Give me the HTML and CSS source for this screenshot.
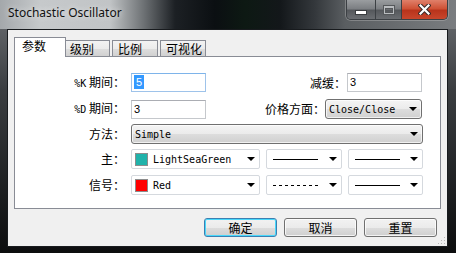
FILE: index.html
```html
<!DOCTYPE html>
<html>
<head>
<meta charset="utf-8">
<link rel="stylesheet" href="styles.css">
</head>
<body>
<div class="window">
  <div class="titlebar">
    <div class="title">Stochastic Oscillator</div>
    <div class="caption">
      <div class="cbtn cmin"><span class="glyph-min"></span></div>
      <div class="cbtn cmax"><span class="glyph-max"></span></div>
      <div class="cbtn cclose">
        <svg width="13" height="11" viewBox="0 0 13 11"><path d="M2.5 1.5 L10.5 9.5 M10.5 1.5 L2.5 9.5" stroke="#3a2a28" stroke-width="4.2" stroke-linecap="square"/><path d="M2.5 1.5 L10.5 9.5 M10.5 1.5 L2.5 9.5" stroke="#ffffff" stroke-width="2.2" stroke-linecap="square"/></svg>
      </div>
    </div>
  </div>
  <div class="client">
    <div class="tabs">
      <div class="tab active">参数</div>
      <div class="tab">级别</div>
      <div class="tab">比例</div>
      <div class="tab">可视化</div>
    </div>
    <div class="panel">
      <div class="row r1">
        <div class="lbl"><span class="mono">%K</span> 期间：</div>
        <div class="edit focus w75"><span class="sel">5</span></div>
        <div class="lbl2">减缓：</div>
        <div class="edit w75 gap1">3</div>
      </div>
      <div class="row r2">
        <div class="lbl"><span class="mono">%D</span> 期间：</div>
        <div class="edit w75">3</div>
        <div class="lbl2">价格方面：</div>
        <div class="drop w97"><span class="mono">Close/Close</span><span class="arrow"></span></div>
      </div>
      <div class="row r3">
        <div class="lbl">方法：</div>
        <div class="drop w292"><span class="mono">Simple</span><span class="arrow"></span></div>
      </div>
      <div class="row r4">
        <div class="lbl">主：</div>
        <div class="combo w129"><span class="swatch sea"></span><span class="mono">LightSeaGreen</span><span class="arrow"></span></div>
        <div class="combo w76 gap6"><svg class="line" width="45" height="3" viewBox="0 0 45 3"><line x1="0" y1="1.5" x2="45" y2="1.5" stroke="#000" stroke-width="1"/></svg><span class="arrow"></span></div>
        <div class="combo w75 gap6"><svg class="line" width="45" height="3" viewBox="0 0 45 3"><line x1="0" y1="1.5" x2="45" y2="1.5" stroke="#000" stroke-width="1"/></svg><span class="arrow"></span></div>
      </div>
      <div class="row r5">
        <div class="lbl">信号：</div>
        <div class="combo w129"><span class="swatch red"></span><span class="mono">Red</span><span class="arrow"></span></div>
        <div class="combo w76 gap6"><svg class="line" width="45" height="3" viewBox="0 0 45 3"><line x1="0" y1="1.5" x2="45" y2="1.5" stroke="#000" stroke-width="1" stroke-dasharray="3 3"/></svg><span class="arrow"></span></div>
        <div class="combo w75 gap6"><svg class="line" width="45" height="3" viewBox="0 0 45 3"><line x1="0" y1="1.5" x2="45" y2="1.5" stroke="#000" stroke-width="1"/></svg><span class="arrow"></span></div>
      </div>
    </div>
    <div class="buttons">
      <div class="btn default">确定</div>
      <div class="btn">取消</div>
      <div class="btn">重置</div>
    </div>
    <div class="gripwrap">
      <svg class="grip" width="8" height="8" viewBox="0 0 8 8">
        <rect x="6" y="0" width="1" height="1" fill="#b8b8b8"/>
        <rect x="3" y="3" width="1" height="1" fill="#b8b8b8"/><rect x="6" y="3" width="1" height="1" fill="#b8b8b8"/>
        <rect x="0" y="6" width="1" height="1" fill="#b8b8b8"/><rect x="3" y="6" width="1" height="1" fill="#b8b8b8"/><rect x="6" y="6" width="1" height="1" fill="#b8b8b8"/>
      </svg>
    </div>
  </div>
</div>
</body>
</html>
```

FILE: styles.css
```css
* { box-sizing: border-box; }
html, body { margin: 0; padding: 0; }
body {
  width: 456px;
  height: 253px;
  overflow: hidden;
  background: #000;
  font-family: "Noto Sans CJK SC", sans-serif;
  font-size: 12px;
  color: #000;
}
.window {
  width: 456px;
  height: 253px;
  display: flex;
  flex-direction: column;
  padding: 0 8px 8px 7px;
  background:
    linear-gradient(to right, #a4a8ab 0, #c6c9cb 40px, #c1c4c6 110px, #6a6e71 145px, #1c2024 175px, #0b0f12 215px, #0d1913 245px, #13171a 280px, #34383c 315px, #5a5e61 345px, #7a7d80 456px) top left / 100% 29px no-repeat,
    linear-gradient(to bottom, #6f7276 0, #3a3d40 90px, #1a1c1e 200px, #0c0d0e 253px);
}
.titlebar {
  height: 29px;
  display: flex;
  align-items: flex-start;
  flex: none;
}
.title {
  font-family: "Noto Sans", sans-serif;
  font-size: 12px;
  line-height: 16px;
  padding: 5px 0 0 1px;
  color: #111;
  text-shadow: 0 0 6px rgba(255,255,255,0.8);
}
.caption {
  margin-left: auto;
  display: flex;
  height: 20px;
  border: 1px solid #3c4044;
  border-top: none;
  border-radius: 0 0 5px 5px;
  overflow: hidden;
  box-shadow: 0 0 0 1px rgba(200,200,200,0.35);
}
.cbtn {
  height: 19px;
  display: flex;
  align-items: center;
  justify-content: center;
}
.cmin, .cmax {
  background: linear-gradient(to bottom, #9a9da0 0, #7c7f83 45%, #55585c 55%, #6b6e72 100%);
  border-right: 1px solid #3c4044;
}
.cmin { width: 29px; }
.cmax { width: 26px; }
.cclose {
  width: 45px;
  background: linear-gradient(to bottom, #e0806a 0, #cf5236 45%, #b9341c 55%, #c8462c 100%);
}
.glyph-min {
  width: 10px;
  height: 3px;
  margin-top: 5px;
  background: #fff;
  box-shadow: 0 0 0 1px #3a3d40;
}
.glyph-max {
  width: 10px;
  height: 8px;
  border: 1px solid #b9bcbf;
  border-top-width: 2px;
  box-shadow: 0 0 0 1px #55585b, inset 0 0 0 1px #55585b;
}
.client {
  flex: 1;
  background: #f0f0f0;
  border: 1px solid #181b1e;
  display: flex;
  flex-direction: column;
  padding: 7px 6px 0 6px;
}
.tabs {
  display: flex;
  align-items: flex-end;
  height: 20px;
  flex: none;
}
.tab {
  height: 17px;
  width: 46px;
  margin-left: 2px;
  padding: 1px 0 0 5px;
  line-height: 14px;
  border: 1px solid #898c95;
  border-bottom: none;
  background: linear-gradient(to bottom, #f3f3f3 0, #ebebeb 50%, #dddddd 51%, #cfcfcf 100%);
}
.tab.active {
  position: relative;
  z-index: 1;
  height: 20px;
  width: 52px;
  margin-left: 0;
  margin-right: -2px;
  padding: 1px 0 0 7px;
  background: #fff;
}
.tab.active + .tab { margin-left: 0; }
.panel {
  margin-top: -1px;
  height: 153px;
  flex: none;
  background: #fff;
  border: 1px solid #898c95;
  padding: 16px 18px 0 0;
}
.row {
  display: flex;
  align-items: center;
}
.r1 { height: 19px; }
.r2 { height: 20px; margin-top: 7px; }
.r3 { height: 20px; margin-top: 5px; }
.r4 { height: 20px; margin-top: 5px; }
.r5 { height: 20px; margin-top: 6px; }
.lbl {
  width: 110px;
  text-align: right;
  margin-right: 6px;
  line-height: 16px;
  white-space: nowrap;
  flex: none;
}
.lbl2 {
  flex: 1;
  text-align: right;
  line-height: 16px;
  white-space: nowrap;
}
.mono {
  font-family: "DejaVu Sans Mono", monospace;
  font-size: 10px;
}
.edit {
  height: 19px;
  border: 1px solid #c5c8cc;
  border-top-color: #abadb3;
  background: #fff;
  font-family: "Liberation Sans", sans-serif;
  font-size: 11px;
  line-height: 17px;
  padding-left: 2px;
  flex: none;
}
.edit.focus {
  border-color: #9ec3ea;
  border-top-color: #7eb4ea;
}
.sel {
  display: inline-block;
  background: #3399ff;
  color: #fff;
  height: 14px;
  line-height: 14px;
  padding: 0 2px;
  margin-top: 1px;
}
.gap1 { margin-left: 1px; }
.gap6 { margin-left: 6px; }
.w75 { width: 75px; }
.w76 { width: 76px; }
.w97 { width: 97px; }
.w129 { width: 129px; }
.w292 { width: 292px; }
.drop {
  height: 20px;
  flex: none;
  display: flex;
  align-items: center;
  padding-left: 3px;
  border: 1px solid #707070;
  border-radius: 3px;
  background: linear-gradient(to bottom, #f4f4f4 0, #ebebeb 50%, #dddddd 51%, #d0d0d0 100%);
  box-shadow: inset 0 0 0 1px rgba(255,255,255,0.7);
}
.arrow {
  margin-left: auto;
  margin-right: 4px;
  width: 0;
  height: 0;
  border-left: 4px solid transparent;
  border-right: 4px solid transparent;
  border-top: 4px solid #000;
}
.combo {
  height: 20px;
  flex: none;
  display: flex;
  align-items: center;
  padding-left: 3px;
  border: 1px solid #d5d9de;
  border-radius: 2px;
  background: #fff;
}
.swatch {
  width: 13px;
  height: 13px;
  border: 1px solid #8c8c8c;
  margin-right: 5px;
  flex: none;
}
.sea { background: #20b2aa; }
.red { background: #ff0000; }
.line { margin-left: 3px; display: block; }
.buttons {
  display: flex;
  justify-content: flex-end;
  gap: 7px;
  margin-top: 9px;
  padding-right: 4px;
  flex: none;
}
.btn {
  width: 73px;
  height: 19px;
  border: 1px solid #707070;
  border-radius: 3px;
  background: linear-gradient(to bottom, #f2f2f2 0, #ebebeb 50%, #dddddd 51%, #cfcfcf 100%);
  box-shadow: inset 0 0 0 1px rgba(255,255,255,0.75);
  text-align: center;
  line-height: 17px;
}
.btn.default {
  border-color: #3c7fb1;
  box-shadow: inset 0 0 0 1px #48d8fb;
}
.gripwrap {
  flex: 1;
  display: flex;
  justify-content: flex-end;
  align-items: flex-end;
  margin-right: -5px;
  padding-bottom: 1px;
}
.grip { display: block; }
```
